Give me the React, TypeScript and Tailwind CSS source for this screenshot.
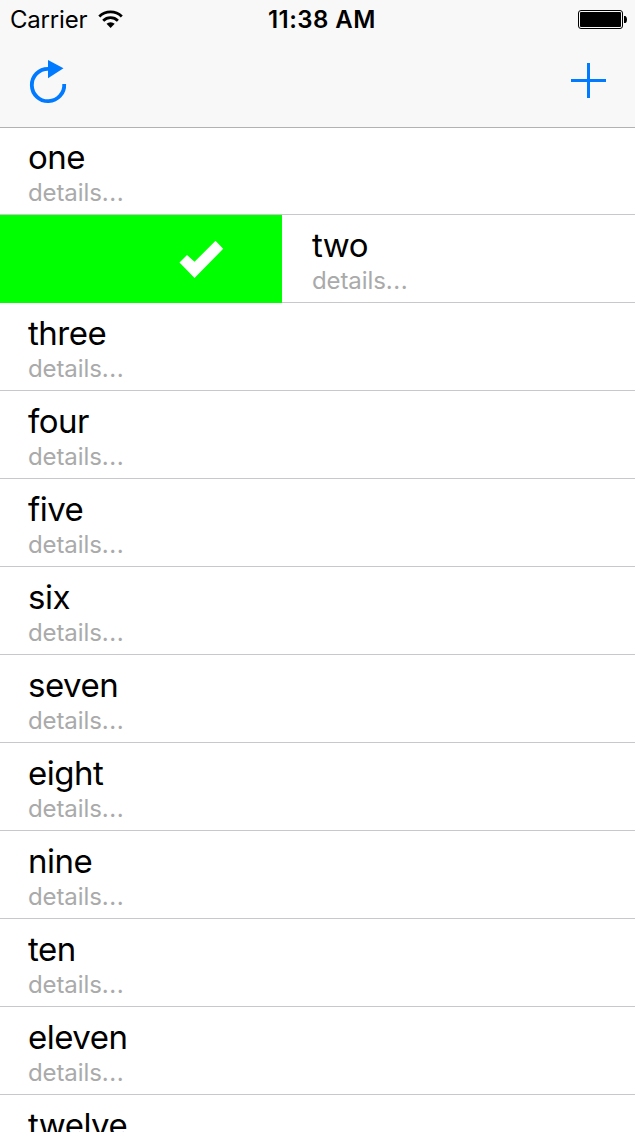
const items = ['one', 'two', 'three', 'four', 'five', 'six', 'seven', 'eight', 'nine', 'ten', 'eleven', 'twelve'];

function WifiIcon() {
  return (
    <svg width="26" height="20" viewBox="98 9 26 20" fill="none" stroke="#000" strokeWidth="2.8">
      <path d="M99.300 16.500a16.200 16.200 0 0 1 22.500 0" />
      <path d="M103.200 20.700a10.500 10.500 0 0 1 14.700 0" />
      <path d="M110.600 28l-4.100-4.200a6.100 6.100 0 0 1 8.200 0z" fill="#000" stroke="none" />
    </svg>
  );
}

function BatteryIcon() {
  return (
    <svg width="50" height="20" viewBox="578 10 50 20">
      <rect x="578.5" y="10.5" width="44" height="18" rx="2.5" fill="none" stroke="#000" />
      <rect x="580" y="12" width="41" height="15" rx="1" fill="#000" />
      <path d="M624 16h1.500q1.500 1 1.500 3.500t-1.500 3.500H624z" fill="#000" />
    </svg>
  );
}

function StatusBar() {
  return (
    <div className="flex h-10 items-start text-[24px] leading-[40px] text-black">
      <div className="flex w-[212px] pl-[10px]">
        <span className="w-[88px] whitespace-nowrap tracking-[-0.2px]">Carrier</span>
        <span className="pt-[9px]"><WifiIcon /></span>
      </div>
      <div className="flex-1 whitespace-nowrap pl-[56px] font-semibold tracking-[0.45px]">11:38 AM</div>
      <div className="pr-[7px] pt-[10px]"><BatteryIcon /></div>
    </div>
  );
}

function Header() {
  return (
    <header className="h-32 shrink-0 border-b border-[#b2b2b2] bg-[#f8f8f8]">
      <StatusBar />
      <div className="flex justify-between pl-[29px] pr-[28px] pt-[19px]">
        <button aria-label="Refresh">
          <svg width="38" height="45" viewBox="29 59 38 45">
            <path d="M48 68.800A16.200 16.200 0 1 0 64.200 84" fill="none" stroke="#007aff" strokeWidth="3.800" />
            <path d="M48 60l15.500 8.200L48 78.200z" fill="#007aff" />
          </svg>
        </button>
        <button aria-label="Add" className="self-start pt-1">
          <svg width="36" height="35" viewBox="0 0 36 35" fill="#007aff">
            <path d="M0 16h35v3H0zM16 0h3v35h-3z" />
          </svg>
        </button>
      </div>
    </header>
  );
}

function Row({ title, first, open }: { title: string; first: boolean; open: boolean }) {
  return (
    <li className={`flex shrink-0 ${first ? 'h-[87px]' : 'h-[88px]'}`}>
      {open && (
        <div className="w-[282px] shrink-0 bg-[#00ff00] pl-[179px] pt-[26px]">
          <svg width="45" height="38" viewBox="179 241 45 38" fill="#fff">
            <path d="M179.500 262.500l7.500-7.500 7.500 6.800 21-21 7.700 8-28.700 29.200z" />
          </svg>
        </div>
      )}
      <div className={`flex-1 border-b border-[#c8c7cc] ${first ? 'pt-[9px]' : 'pt-[10px]'} ${open ? 'pl-[30px]' : 'pl-7'}`}>
        <div className="text-[33px] leading-[40px] tracking-[-0.5px] text-black">{title}</div>
        <div className="mt-px text-[24px] leading-[30px] text-[#aaaaaa]">
          <span className="tracking-[-0.1px]">details</span>
          <span className="tracking-[0.6px]">...</span>
        </div>
      </div>
    </li>
  );
}

export default function App() {
  return (
    <main className="flex h-[1132px] w-[635px] flex-col overflow-hidden bg-white font-['Inter',sans-serif]">
      <Header />
      <ul className="flex flex-col">
        {items.map((title, i) => (
          <Row key={title} title={title} first={i === 0} open={title === 'two'} />
        ))}
      </ul>
    </main>
  );
}
